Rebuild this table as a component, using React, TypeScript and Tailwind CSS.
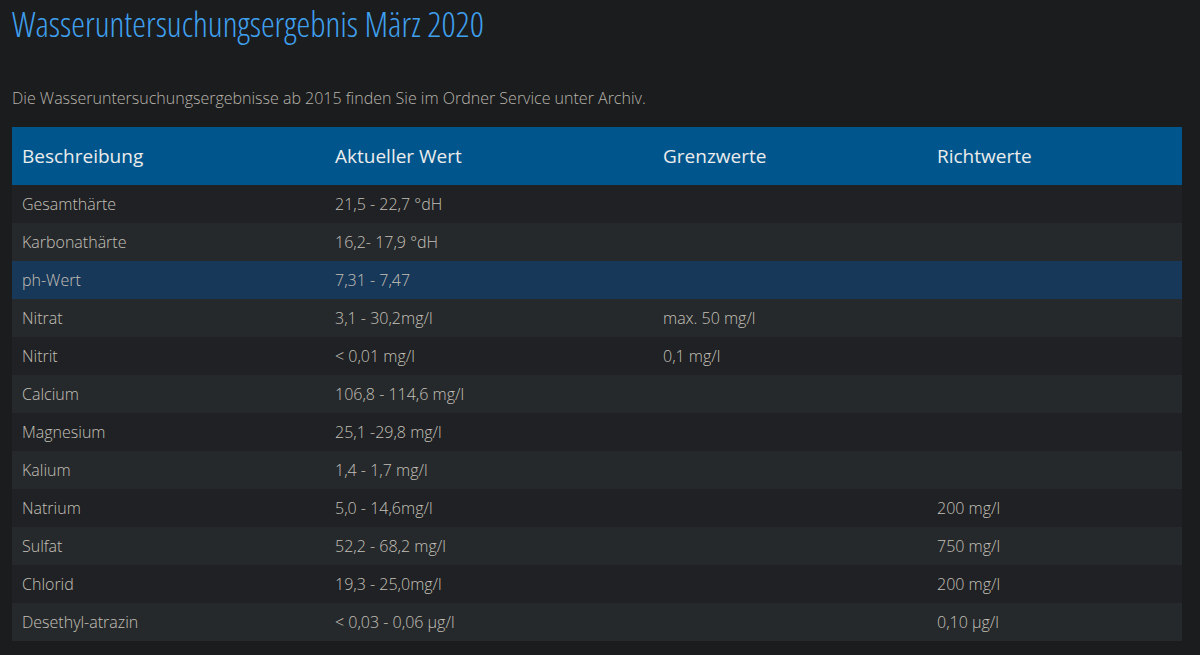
// Wasseruntersuchung – Ergebnistabelle (dunkles Theme).
const rows: { name: string; value: string; grenz?: string; richt?: string; active?: boolean }[] = [
  { name: "Gesamthärte", value: "21,5 - 22,7 °dH" },
  { name: "Karbonathärte", value: "16,2- 17,9 °dH" },
  { name: "ph-Wert", value: "7,31 - 7,47", active: true },
  { name: "Nitrat", value: "3,1 - 30,2mg/l", grenz: "max. 50 mg/l" },
  { name: "Nitrit", value: "< 0,01 mg/l", grenz: "0,1 mg/l" },
  { name: "Calcium", value: "106,8 - 114,6 mg/l" },
  { name: "Magnesium", value: "25,1 -29,8 mg/l" },
  { name: "Kalium", value: "1,4 - 1,7 mg/l" },
  { name: "Natrium", value: "5,0 - 14,6mg/l", richt: "200 mg/l" },
  { name: "Sulfat", value: "52,2 - 68,2 mg/l", richt: "750 mg/l" },
  { name: "Chlorid", value: "19,3 - 25,0mg/l", richt: "200 mg/l" },
  { name: "Desethyl-atrazin", value: "< 0,03 - 0,06 µg/l", richt: "0,10 µg/l" },
];

export default function App() {
  return (
    <div className="min-h-[655px] bg-[#1b1c1e] font-['Open_Sans',sans-serif]">
      <div className="w-[1170px] pl-3">
        <h1 className="pt-[2px] text-[34.8px] font-light leading-[44px] text-[#3fa0ef] [font-stretch:75%]">
          Wasseruntersuchungsergebnis März 2020
        </h1>
        <p className="mt-[42px] text-[16px] font-light leading-[20px] text-[#b8b4ac]">
          Die Wasseruntersuchungsergebnisse ab 2015 finden Sie im Ordner Service unter Archiv.
        </p>
        <table className="mt-[19px] w-[1170px] table-fixed border-collapse">
          <colgroup>
            <col className="w-[313px]" />
            <col className="w-[328px]" />
            <col className="w-[274px]" />
            <col className="w-[255px]" />
          </colgroup>
          <thead>
            <tr className="h-[58px] bg-[#00568c] text-left text-[19px] text-[#ececec]">
              <th className="px-[10px] font-normal">Beschreibung</th>
              <th className="px-[10px] font-normal">Aktueller Wert</th>
              <th className="px-[10px] font-normal">Grenzwerte</th>
              <th className="px-[10px] font-normal">Richtwerte</th>
            </tr>
          </thead>
          <tbody className="text-[16px] font-light text-[#c4c0b8]">
            {rows.map((r, i) => (
              <tr
                key={r.name}
                className={`h-[38px] ${
                  r.active ? "bg-[#18385a]" : i % 2 === 0 ? "bg-[#1f2124]" : "bg-[#26292c]"
                }`}
              >
                <td className="px-[10px]">{r.name}</td>
                <td className="px-[10px]">{r.value}</td>
                <td className="px-[10px]">{r.grenz}</td>
                <td className="px-[10px]">{r.richt}</td>
              </tr>
            ))}
          </tbody>
        </table>
      </div>
    </div>
  );
}
